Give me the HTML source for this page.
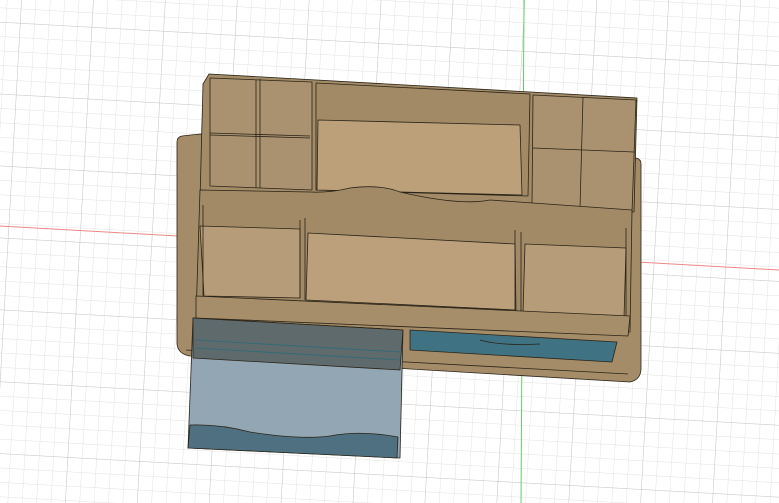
<!DOCTYPE html>
<html><head><meta charset="utf-8"><style>html,body{margin:0;padding:0;background:#fff;overflow:hidden}svg{display:block}</style></head>
<body>
<svg width="779" height="503" viewBox="0 0 779 503" xmlns="http://www.w3.org/2000/svg">
<defs>
<pattern id="minor" width="14.36" height="14.36" patternUnits="userSpaceOnUse" patternTransform="translate(20,23) rotate(3.2)">
<path d="M0 0H14.36M0 0V14.36" stroke="#e3e3e3" stroke-width="1" fill="none"/>
</pattern>
<pattern id="major" width="71.8" height="71.8" patternUnits="userSpaceOnUse" patternTransform="translate(20,23) rotate(3.2)">
<path d="M0 0H71.8M0 0V71.8" stroke="#c9c9c9" stroke-width="1" fill="none"/>
</pattern>
</defs>
<rect width="779" height="503" fill="#fff"/>
<rect width="779" height="503" fill="url(#minor)"/>
<rect width="779" height="503" fill="url(#major)"/>
<line x1="0" y1="226" x2="779" y2="270" stroke="#e88" stroke-width="1"/>
<line x1="524" y1="0" x2="521" y2="503" stroke="#6c6" stroke-width="1"/>

<g stroke="#2a2418" stroke-width="0.8" stroke-linejoin="round">
<path d="M182 136 L200 134 L636 158 Q641 159 641 164 L641 370 Q640 380 630 382 L190 356 Q178 354 177 344 L177 142 Q177 137 182 136Z" fill="#a48c68"/>
<path d="M186 350 L628 374" fill="none"/>
<path d="M203 84 L209 74 L637 98 L634 212 L200 200Z" fill="#a38b68"/>
<path d="M210 78 L312 82 L312 190 L210 186Z" fill="#aa9270"/>
<path d="M210 135 L310 138 M210 133 L310 136" fill="none"/>
<path d="M260 79 L260 188 M256 80 L256 188" fill="none"/>
<path d="M316 83 L530 94 L528 196 L316 190Z" fill="#a38a66"/>
<path d="M318 120 L520 125 L522 195 L317 190Z" fill="#bba07a"/>
<path d="M533 95 L636 100 L632 212 L532 206Z" fill="#aa9270"/>
<path d="M533 148 L634 152" fill="none"/>
<path d="M583 97 L580 208" fill="none"/>
<path d="M200 190 L310 192 Q330 193 350 188 Q380 184 400 192 Q460 206 490 200 L632 210 L630 332 L196 318Z" fill="#a28a67"/>
<path d="M200 226 L300 229 L300 298 L204 296Z" fill="#b69c78"/>
<path d="M308 233 L515 244 L516 310 L306 300Z" fill="#bca07b"/>
<path d="M525 244 L626 248 L624 318 L523 314Z" fill="#b69c78"/>
<path d="M300 220 L300 298 M305 218 L305 300 M515 230 L515 312 M521 232 L521 314 M203 205 L203 298 M626 228 L626 318" fill="none"/>
<path d="M196 296 L630 316 L628 336 L196 318Z" fill="#a68e6a"/>
<path d="M410 330 L617 342 L612 362 L410 350Z" fill="#3f7282"/>
<path d="M480 340 Q500 346 540 344" fill="none"/>
<path d="M193 318 L403 330 L400 458 L188 448Z" fill="#93a6b4"/>
<path d="M193 318 L403 330 L400 370 L193 358Z" fill="#5e6a6c"/>
<path d="M195 340 L400 352 M195 348 L400 360" stroke="#2d6a7a" fill="none"/>
<path d="M190 425 Q220 424 250 432 Q300 440 330 436 Q360 430 398 437 L397 458 L188 448Z" fill="#4f7080"/>
</g>
</svg>
</body></html>
